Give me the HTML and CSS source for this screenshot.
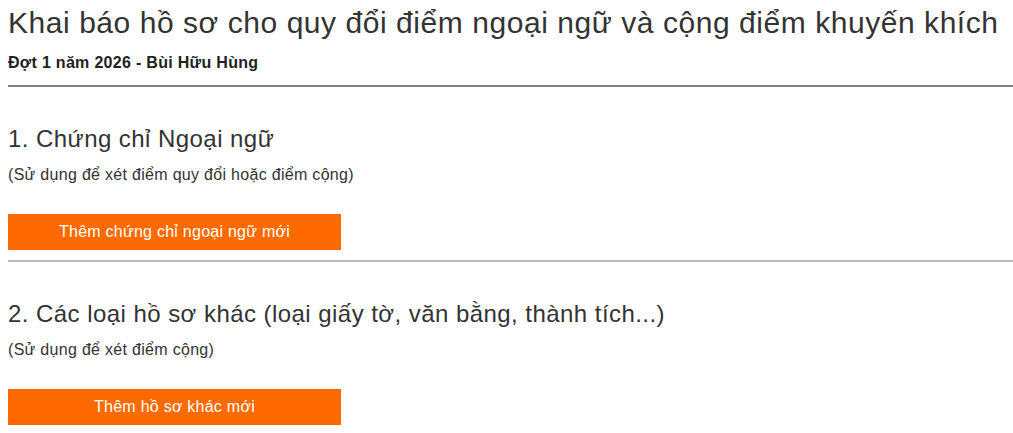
FILE: index.html
```html
<!DOCTYPE html>
<html lang="vi">
<head>
<meta charset="utf-8">
<title>Khai báo hồ sơ</title>
<link rel="stylesheet" href="styles.css">
</head>
<body>
<div class="page">
  <header class="header">
    <h1 class="title">Khai báo hồ sơ cho quy đổi điểm ngoại ngữ và cộng điểm khuyến khích</h1>
    <div class="subtitle">Đợt 1 năm 2026 - Bùi Hữu Hùng</div>
  </header>
  <hr class="rule rule-dark">
  <section class="section">
    <h2 class="section-title">1. Chứng chỉ Ngoại ngữ</h2>
    <p class="section-desc">(Sử dụng để xét điểm quy đổi hoặc điểm cộng)</p>
    <button class="btn" type="button">Thêm chứng chỉ ngoại ngữ mới</button>
  </section>
  <hr class="rule rule-light">
  <section class="section">
    <h2 class="section-title">2. Các loại hồ sơ khác (loại giấy tờ, văn bằng, thành tích...)</h2>
    <p class="section-desc">(Sử dụng để xét điểm cộng)</p>
    <button class="btn" type="button">Thêm hồ sơ khác mới</button>
  </section>
</div>
</body>
</html>
```
FILE: styles.css
```css
html, body {
  margin: 0;
  padding: 0;
  background: #ffffff;
}
body {
  font-family: "Liberation Sans", Arial, sans-serif;
  color: #333333;
}
.page {
  padding-left: 8px;
}
.header {
  padding-top: 5px;
}
.title {
  margin: 0;
  font-size: 30px;
  line-height: 36px;
  font-weight: normal;
  letter-spacing: 0.55px;
  color: #333333;
}
.subtitle {
  margin-top: 13px;
  font-size: 16px;
  line-height: 18px;
  font-weight: bold;
  letter-spacing: 0.3px;
  color: #222222;
}
.rule {
  border: 0;
  height: 2px;
  margin: 0;
}
.rule-dark {
  margin-top: 13px;
  background: #808080;
}
.rule-light {
  margin-top: 10px;
  background: #bbbbbb;
}
.section {
  display: flex;
  flex-direction: column;
  align-items: flex-start;
}
.section-title {
  margin: 38px 0 0;
  font-size: 24px;
  line-height: 28px;
  font-weight: normal;
  letter-spacing: 0.45px;
  color: #333333;
}
.section-desc {
  margin: 13px 0 0;
  font-size: 16px;
  line-height: 18px;
  letter-spacing: 0.3px;
  color: #333333;
}
.btn {
  margin-top: 30px;
  width: 333px;
  height: 36px;
  border: 0;
  padding: 0;
  background: #ff6a00;
  color: #ffffff;
  font-family: "Liberation Sans", Arial, sans-serif;
  font-size: 16px;
  letter-spacing: 0.25px;
  cursor: pointer;
}
```
